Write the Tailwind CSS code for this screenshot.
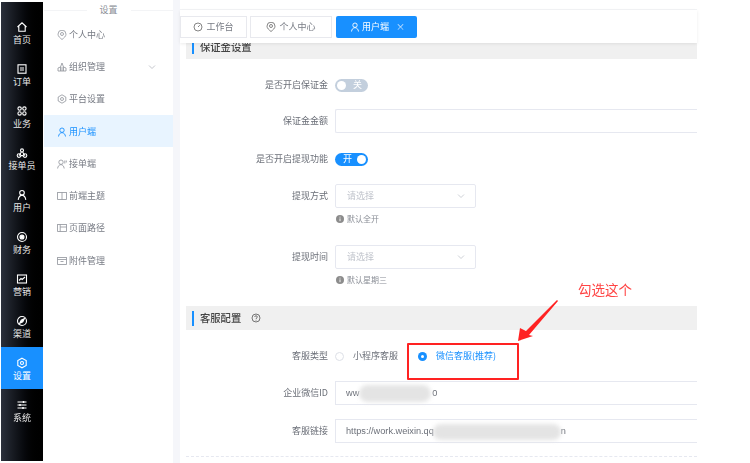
<!DOCTYPE html>
<html lang="zh-CN">
<head>
  <meta charset="UTF-8" />
  <title>用户端设置</title>
  <script src="https://cdn.jsdelivr.net/npm/@tailwindcss/browser@4"></script>
</head>
<body class="bg-white overflow-hidden font-['Noto_Sans_CJK_SC','Noto_Sans',sans-serif] text-[9px] text-[#6b6f78]">
  <div class="relative flex w-[750px] h-[463px] overflow-hidden blur-[0.35px]">

    <!-- Rail -->
    <nav class="ml-px mt-[2px] w-[42px] h-[459px] pt-[9px] shrink-0 bg-gradient-to-r from-[#2b303b] to-black text-[#e8e8e8] text-center leading-[12px]">
      <a class="flex flex-col items-center h-[42px] pt-[10px]">
        <svg class="w-3 h-3" viewBox="0 0 12 12" fill="none" stroke="#fff" stroke-width="1.1"><path d="M1.500 6 6 1.800 10.500 6M2.800 5v5.200h6.400V5"/></svg>
        <span class="mt-[1px]">首页</span>
      </a>
      <a class="flex flex-col items-center h-[42px] pt-[10px]">
        <svg class="w-3 h-3" viewBox="0 0 12 12" fill="none" stroke="#fff" stroke-width="1.1"><rect x="2" y="1.800" width="8" height="8.400"/><path d="M4 5h4M4 7h4"/></svg>
        <span class="mt-[1px]">订单</span>
      </a>
      <a class="flex flex-col items-center h-[42px] pt-[10px]">
        <svg class="w-3 h-3" viewBox="0 0 12 12" fill="none" stroke="#fff" stroke-width="1.1"><circle cx="3.600" cy="3.600" r="1.700"/><circle cx="8.400" cy="3.600" r="1.700"/><circle cx="3.600" cy="8.400" r="1.700"/><circle cx="8.400" cy="8.400" r="1.700"/></svg>
        <span class="mt-[1px]">业务</span>
      </a>
      <a class="flex flex-col items-center h-[42px] pt-[10px]">
        <svg class="w-3 h-3" viewBox="0 0 12 12" fill="none" stroke="#fff" stroke-width="1.1"><circle cx="3" cy="8.600" r="1.800"/><circle cx="9" cy="8.600" r="1.800"/><circle cx="6" cy="3.400" r="1.500"/><path d="M3 8.600 5.400 5M9 8.600 6.600 5M5 8.600h2"/></svg>
        <span class="mt-[1px]">接单员</span>
      </a>
      <a class="flex flex-col items-center h-[42px] pt-[10px]">
        <svg class="w-3 h-3" viewBox="0 0 12 12" fill="none" stroke="#fff" stroke-width="1.100"><circle cx="6" cy="3.800" r="2.300"/><path d="M2.200 10.800c.4-2.600 1.800-4.400 3.800-4.700 2 .3 3.400 2.100 3.800 4.700"/></svg>
        <span class="mt-[1px]">用户</span>
      </a>
      <a class="flex flex-col items-center h-[42px] pt-[10px]">
        <svg class="w-3 h-3" viewBox="0 0 12 12" fill="none" stroke="#fff" stroke-width="1.100"><circle cx="6" cy="6" r="4.500"/><circle cx="6" cy="6" r="2" fill="#fff"/></svg>
        <span class="mt-[1px]">财务</span>
      </a>
      <a class="flex flex-col items-center h-[42px] pt-[10px]">
        <svg class="w-3 h-3" viewBox="0 0 12 12" fill="none" stroke="#fff" stroke-width="1.100"><rect x="1.500" y="2" width="9" height="8"/><path d="M3 7.500 5 5.500l1.200 1L9 4"/></svg>
        <span class="mt-[1px]">营销</span>
      </a>
      <a class="flex flex-col items-center h-[42px] pt-[10px]">
        <svg class="w-3 h-3" viewBox="0 0 12 12" fill="none" stroke="#fff" stroke-width="1.100"><circle cx="6" cy="6" r="4.500"/><path d="M8.300 3.700 6.800 6.800 3.700 8.300 5.200 5.200z" fill="#fff"/></svg>
        <span class="mt-[1px]">渠道</span>
      </a>
      <a class="flex flex-col items-center h-[42px] pt-[10px] bg-[#1890ff] text-white">
        <svg class="w-3 h-3" viewBox="0 0 12 12" fill="none" stroke="#fff" stroke-width="1.100"><path d="M6 1.200 10.200 3.600v4.800L6 10.800 1.800 8.400V3.600z"/><circle cx="6" cy="6" r="1.500"/></svg>
        <span class="mt-[1px]">设置</span>
      </a>
      <a class="flex flex-col items-center h-[42px] pt-[10px]">
        <svg class="w-3 h-3" viewBox="0 0 12 12" fill="none" stroke="#fff" stroke-width="1.100"><path d="M1.500 3h9M1.500 6h9M1.500 9h9"/><path d="M7.500 2v2M4 5v2M7 8v2" stroke-width="1.500"/></svg>
        <span class="mt-[1px]">系统</span>
      </a>
    </nav>

    <!-- Secondary menu -->
    <aside class="w-[129px] ml-px shrink-0 text-[#777b84]">
      <div class="relative h-[18px] pt-[3px]">
        <div class="absolute left-0 right-0 top-[10px] border-t border-[#f3f4f6]"></div>
        <div class="relative w-[44px] mx-auto bg-white text-center leading-[14px] text-[#8a8e96]">设置</div>
      </div>
      <ul class="leading-[12px]">
        <li class="flex items-center h-[32.300px] pt-[1px] pl-[13px] gap-[2px]">
          <svg class="w-[10px] h-[10px]" viewBox="0 0 10 10" fill="none" stroke="#8f939b" stroke-width=".8"><path d="M5 9.500C3 7.800 1 6.300 1 4.200a4 4 0 0 1 8 0C9 6.300 7 7.800 5 9.500z"/><circle cx="5" cy="4" r="1.500"/></svg>
          <span>个人中心</span>
        </li>
        <li class="flex items-center h-[32.300px] pt-[1px] pl-[13px] gap-[2px]">
          <svg class="w-[10px] h-[10px]" viewBox="0 0 10 10" fill="none" stroke="#8f939b" stroke-width=".8"><path d="M5 1 3.500 5 1 6v3h8V6L6.500 5zM3.500 5v4M6.500 5v4M5 5v4"/></svg>
          <span>组织管理</span>
          <svg class="w-2 h-2 ml-[41px]" viewBox="0 0 8 8" fill="none" stroke="#b5b8bf" stroke-width=".8"><path d="M1 2.500 4 5.500l3-3"/></svg>
        </li>
        <li class="flex items-center h-[32.300px] pt-[1px] pl-[13px] gap-[2px]">
          <svg class="w-[10px] h-[10px]" viewBox="0 0 10 10" fill="none" stroke="#8f939b" stroke-width=".8"><path d="M5 .8 8.800 3v4L5 9.200 1.200 7V3z"/><circle cx="5" cy="5" r="1.500"/></svg>
          <span>平台设置</span>
        </li>
        <li class="flex items-center h-[32.300px] pt-[1px] pl-[13px] gap-[2px] bg-[#e8f4ff] text-[#1890ff]">
          <svg class="w-[10px] h-[10px]" viewBox="0 0 10 10" fill="none" stroke="#1890ff" stroke-width=".9"><circle cx="5" cy="3.200" r="2.200"/><path d="M1.500 9.500c.3-2.300 1.600-3.700 3.500-3.900 1.900.2 3.200 1.600 3.500 3.900"/></svg>
          <span>用户端</span>
        </li>
        <li class="flex items-center h-[32.300px] pt-[1px] pl-[13px] gap-[2px]">
          <svg class="w-[10px] h-[10px]" viewBox="0 0 10 10" fill="none" stroke="#8f939b" stroke-width=".8"><circle cx="4" cy="3.200" r="2.200"/><path d="M.6 9.500c.3-2.300 1.500-3.700 3.400-3.900 1.700.2 2.900 1.600 3.200 3.900M7.800 1.500v3M9.300 1.500v2"/></svg>
          <span>接单端</span>
        </li>
        <li class="flex items-center h-[32.300px] pt-[1px] pl-[13px] gap-[2px]">
          <svg class="w-[10px] h-[10px]" viewBox="0 0 10 10" fill="none" stroke="#8f939b" stroke-width=".8"><rect x=".6" y="1.500" width="8.800" height="7"/><path d="M5 1.500v7"/></svg>
          <span>前端主题</span>
        </li>
        <li class="flex items-center h-[32.300px] pt-[1px] pl-[13px] gap-[2px]">
          <svg class="w-[10px] h-[10px]" viewBox="0 0 10 10" fill="none" stroke="#8f939b" stroke-width=".8"><rect x=".6" y="1.500" width="8.800" height="7"/><path d="M3.200 1.500v7M3.200 4h6.200"/></svg>
          <span>页面路径</span>
        </li>
        <li class="flex items-center h-[32.300px] pt-[1px] pl-[13px] gap-[2px]">
          <svg class="w-[10px] h-[10px]" viewBox="0 0 10 10" fill="none" stroke="#8f939b" stroke-width=".8"><rect x=".6" y="1.500" width="8.800" height="7"/><path d="M.6 3.500h8.800M3.500 5.500h3"/></svg>
          <span>附件管理</span>
        </li>
      </ul>
    </aside>

    <div class="w-[7px] shrink-0 bg-[#f5f6fa]"></div>

    <!-- Main -->
    <main class="w-[517px] shrink-0 flex flex-col">
      <div class="h-[10px] border-b border-[#f3f4f6]"></div>
      <!-- Tabs -->
      <div class="relative z-10 flex items-start h-[33px] pt-[6px] bg-white shadow-[0_1px_3px_rgba(0,0,0,0.08)] leading-[12px]">
        <div class="flex items-center justify-center gap-[3px] w-[67px] h-[22px] border border-[#e8e9ee] text-[#777b84]">
          <svg class="w-[10px] h-[10px]" viewBox="0 0 10 10" fill="none" stroke="#666" stroke-width=".8"><circle cx="5" cy="5" r="4"/><path d="M5 5 6.800 3.200"/></svg>
          <span>工作台</span>
        </div>
        <div class="flex items-center justify-center gap-[3px] w-[82px] h-[22px] ml-[3px] border border-[#e8e9ee] text-[#777b84]">
          <svg class="w-[10px] h-[10px]" viewBox="0 0 10 10" fill="none" stroke="#666" stroke-width=".8"><path d="M5 9.500C3 7.800 1 6.300 1 4.200a4 4 0 0 1 8 0C9 6.300 7 7.800 5 9.500z"/><circle cx="5" cy="4" r="1.500"/></svg>
          <span>个人中心</span>
        </div>
        <div class="flex items-center w-[81px] h-[22px] ml-[4px] pl-[14px] gap-[2px] rounded-[2px] bg-[#1890ff] text-white">
          <svg class="w-[10px] h-[10px]" viewBox="0 0 10 10" fill="none" stroke="#fff" stroke-width=".9"><circle cx="5" cy="3.200" r="2.200"/><path d="M1.500 9.500c.3-2.300 1.600-3.700 3.500-3.900 1.900.2 3.200 1.600 3.500 3.900"/></svg>
          <span>用户端</span>
          <span class="ml-[5px] text-[9px] text-[#d5e9ff]">×</span>
        </div>
      </div>

      <!-- Form -->
      <div class="flex-1 overflow-hidden pl-[6px] leading-[12px]">
        <div class="flex items-center h-6 -mt-2 bg-[#f0f0f0] text-[#444] text-[10.300px] font-medium">
          <span class="w-[2px] h-[13px] ml-[6px] mr-[6px] bg-[#1890ff]"></span>保证金设置
        </div>

        <div class="flex items-center h-6 mt-[14px]">
          <label class="w-[142px] mr-[7px] text-right">是否开启保证金</label>
          <span class="relative flex items-center justify-end w-[33px] h-[13px] pr-[6px] rounded-full bg-[#c3cfdd] text-white">
            <i class="absolute left-[2px] top-[2px] w-[9px] h-[9px] rounded-full bg-white"></i>关
          </span>
        </div>

        <div class="flex items-center h-6 mt-3">
          <label class="w-[142px] mr-[7px] text-right">保证金金额</label>
          <div class="flex-1 h-6 rounded-l-[2px] border border-r-0 border-[#e6e8f0]"></div>
        </div>

        <div class="flex items-center h-6 mt-[14px]">
          <label class="w-[142px] mr-[7px] text-right">是否开启提现功能</label>
          <span class="relative flex items-center w-[33px] h-[13px] pl-[8px] rounded-full bg-[#1890ff] text-white">
            开<i class="absolute right-[2px] top-[2px] w-[9px] h-[9px] rounded-full bg-white"></i>
          </span>
        </div>

        <div class="flex items-center h-6 mt-[13px]">
          <label class="w-[142px] mr-[7px] text-right">提现方式</label>
          <div class="flex items-center justify-between w-[141px] h-6 pl-[11px] pr-[10px] rounded-[2px] border border-[#e6e8f0] text-[#c0c4cc]">
            请选择
            <svg class="w-2 h-2" viewBox="0 0 8 8" fill="none" stroke="#c0c4cc" stroke-width=".8"><path d="M1 2.500 4 5.500l3-3"/></svg>
          </div>
        </div>
        <div class="flex items-center gap-[3px] h-4 mt-[3px] ml-[150px] text-[8px] text-[#8a8e96]">
          <svg class="w-[8px] h-[8px]" viewBox="0 0 8 8"><circle cx="4" cy="4" r="4" fill="#8c8c8c"/><path d="M4 3.400v2.800M4 1.700v.9" stroke="#fff" stroke-width=".9"/></svg>
          默认全开
        </div>

        <div class="flex items-center h-6 mt-[18px]">
          <label class="w-[142px] mr-[7px] text-right">提现时间</label>
          <div class="flex items-center justify-between w-[141px] h-6 pl-[11px] pr-[10px] rounded-[2px] border border-[#e6e8f0] text-[#c0c4cc]">
            请选择
            <svg class="w-2 h-2" viewBox="0 0 8 8" fill="none" stroke="#c0c4cc" stroke-width=".8"><path d="M1 2.500 4 5.500l3-3"/></svg>
          </div>
        </div>
        <div class="flex items-center gap-[3px] h-4 mt-[3px] ml-[150px] text-[8px] text-[#8a8e96]">
          <svg class="w-[8px] h-[8px]" viewBox="0 0 8 8"><circle cx="4" cy="4" r="4" fill="#8c8c8c"/><path d="M4 3.400v2.800M4 1.700v.9" stroke="#fff" stroke-width=".9"/></svg>
          默认星期三
        </div>

        <div class="flex items-center h-6 mt-[18px] bg-[#f0f0f0] text-[#444] text-[10.300px] font-medium">
          <span class="w-[2px] h-[15px] ml-[6px] mr-[6px] bg-[#1890ff]"></span>客服配置
          <svg class="w-[10px] h-[10px] ml-[10px]" viewBox="0 0 10 10" fill="none" stroke="#555" stroke-width=".8"><circle cx="5" cy="5" r="4"/><path d="M3.700 4c0-1.700 2.600-1.700 2.600 0 0 1-1.300 1-1.300 2M5 6.800v.8"/></svg>
        </div>

        <div class="flex items-center h-6 mt-[14px]">
          <label class="w-[142px] mr-[7px] text-right">客服类型</label>
          <span class="w-[9px] h-[9px] rounded-full border border-[#dcdfe6]"></span>
          <span class="ml-[9px]">小程序客服</span>
          <span class="flex items-center justify-center w-[9px] h-[9px] ml-[20px] rounded-full bg-[#1890ff]"><i class="w-[3px] h-[3px] rounded-full bg-white"></i></span>
          <span class="ml-[9px] text-[#1890ff]">微信客服(推荐)</span>
        </div>

        <div class="flex items-center h-6 mt-[13px]">
          <label class="w-[142px] mr-[7px] text-right">企业微信ID</label>
          <div class="relative flex items-center flex-1 h-6 pl-[10px] border border-r-0 border-[#e6e8f0] text-[9.200px] font-['Liberation_Sans',sans-serif]">
            ww<span class="ml-[73px]">0</span>
            <i class="absolute left-[23px] top-[3px] w-[72px] h-[17px] rounded-full bg-[#e4e4e4] blur-[2px]"></i>
          </div>
        </div>

        <div class="flex items-center h-6 mt-[14px]">
          <label class="w-[142px] mr-[7px] text-right">客服链接</label>
          <div class="relative flex items-center flex-1 h-6 pl-[10px] border border-r-0 border-[#e6e8f0] text-[9.200px] font-['Liberation_Sans',sans-serif]">
            https://work.weixin.qq<span class="ml-[127px]">n</span>
            <i class="absolute left-[97px] top-[4px] w-[128px] h-[16px] rounded-full bg-[#e4e4e4] blur-[2px]"></i>
          </div>
        </div>

        <div class="mt-[13px] border-t border-dashed border-[#e6e8f0]"></div>
      </div>
    </main>

    <!-- Annotation -->
    <div class="absolute left-[407px] top-[343px] w-[112px] h-[37px] rounded-[1px] border-2 border-[#f22]"></div>
    <svg class="absolute left-[515px] top-[296px]" width="46" height="48" viewBox="0 0 46 48" fill="#f22">
      <path d="M3 45 5 32l6 3L42 4l1 1-29 34 4 1z"/>
    </svg>
    <div class="absolute left-[578px] top-[280px] text-[13.500px] leading-[18px] text-[#f44]">勾选这个</div>
  </div>
</body>
</html>
